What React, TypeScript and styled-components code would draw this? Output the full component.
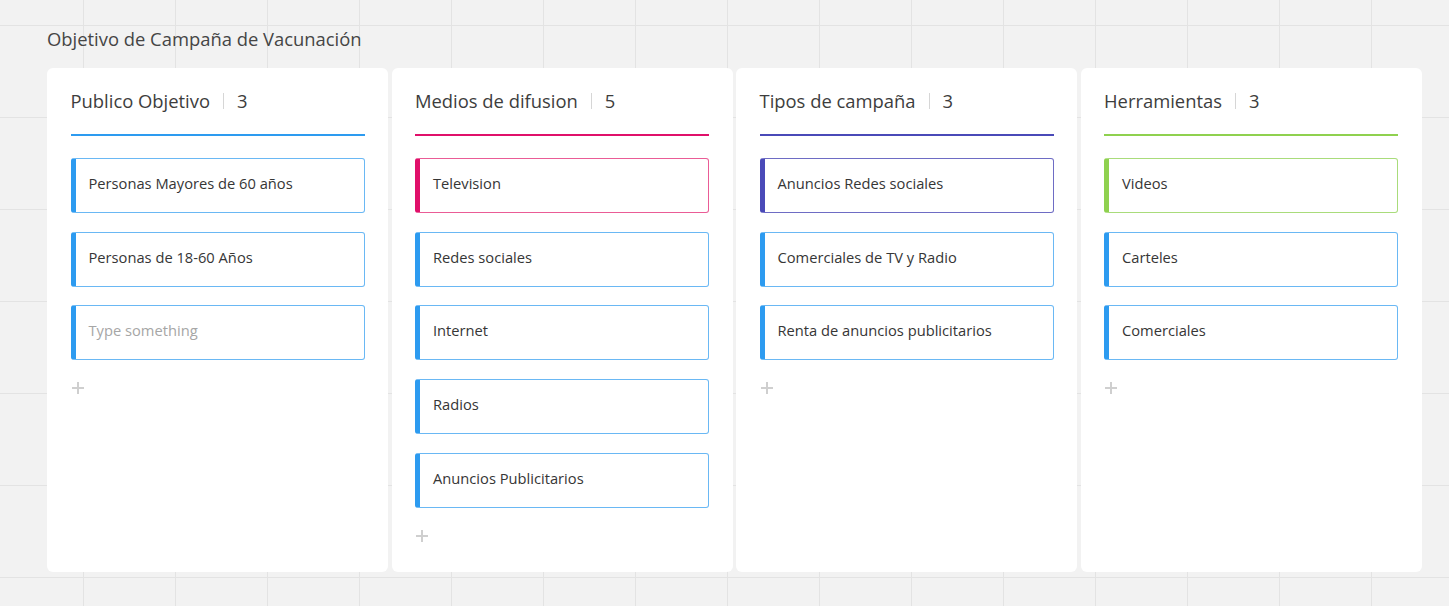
import React from "react";
import styled, { createGlobalStyle } from "styled-components";

const Global = createGlobalStyle`
  html, body { margin: 0; padding: 0; }
  body {
    font-family: "Open Sans", "Noto Sans", sans-serif;
    background-color: #f2f2f2;
    background-image:
      linear-gradient(to right, #e3e3e3 1px, transparent 1px),
      linear-gradient(to bottom, #e3e3e3 1px, transparent 1px);
    background-size: 92px 92px;
    background-position: 83px 25px;
    min-height: 606px;
    overflow: hidden;
  }
`;

const Page = styled.div`
  padding: 27px 28px 0 47px;
`;

const Title = styled.h1`
  margin: 0 0 17px;
  font-size: 18.4px;
  line-height: 24px;
  font-weight: 400;
  color: #454545;
`;

const Board = styled.div`
  display: grid;
  grid-template-columns: repeat(4, 341px);
  column-gap: 3.5px;
`;

const Column = styled.section`
  background: #fff;
  border-radius: 6px;
  height: 504px;
  box-sizing: border-box;
  padding: 21px 23.5px 0 23.5px;
  display: flex;
  flex-direction: column;
`;

const Header = styled.div<{ $color: string }>`
  display: flex;
  align-items: center;
  height: 24px;
  padding-bottom: 21px;
  border-bottom: 2px solid ${(p) => p.$color};
  margin-bottom: 22px;
`;

const HeaderTitle = styled.span`
  font-size: 18.4px;
  line-height: 24px;
  color: #3d3d3d;
`;

const Divider = styled.span`
  width: 1px;
  height: 16px;
  background: #d6d6d6;
  margin: 0 13px 0 13px;
`;

const Count = styled.span`
  font-size: 18.4px;
  line-height: 24px;
  color: #3d3d3d;
`;

const Cards = styled.div`
  display: flex;
  flex-direction: column;
  gap: 18.7px;
`;

const Card = styled.div<{ $color: string; $border: string }>`
  height: 55px;
  box-sizing: border-box;
  border: 1px solid ${(p) => p.$border};
  border-left: 5px solid ${(p) => p.$color};
  border-radius: 3px;
  display: flex;
  align-items: center;
  padding: 0 0 5px 13px;
  font-size: 14.7px;
  color: #363636;
  background: #fff;
`;

const Placeholder = styled.span`
  color: #a6a6a6;
`;

const AddButton = styled.button`
  margin-top: 22px;
  width: 12px;
  height: 12px;
  padding: 0;
  border: 0;
  background: transparent;
  position: relative;
  margin-left: 1px;
  cursor: pointer;
  &::before,
  &::after {
    content: "";
    position: absolute;
    background: #cfcfcf;
  }
  &::before {
    left: 0;
    right: 0;
    top: 5px;
    height: 2px;
  }
  &::after {
    top: 0;
    bottom: 0;
    left: 5px;
    width: 2px;
  }
`;

type Tone = { main: string; light: string };
const blue: Tone = { main: "#2d9bf0", light: "#6ab8f4" };
const pink: Tone = { main: "#e0106a", light: "#ea5c96" };
const purple: Tone = { main: "#4a4ab8", light: "#6e6cc4" };
const green: Tone = { main: "#8fd14f", light: "#a9dc7b" };

type Item = { text: string; tone: Tone; placeholder?: boolean };
type Col = { title: string; tone: Tone; items: Item[] };

const columns: Col[] = [
  {
    title: "Publico Objetivo",
    tone: blue,
    items: [
      { text: "Personas Mayores de 60 años", tone: blue },
      { text: "Personas de 18-60 Años", tone: blue },
      { text: "Type something", tone: blue, placeholder: true },
    ],
  },
  {
    title: "Medios de difusion",
    tone: pink,
    items: [
      { text: "Television", tone: pink },
      { text: "Redes sociales", tone: blue },
      { text: "Internet", tone: blue },
      { text: "Radios", tone: blue },
      { text: "Anuncios Publicitarios", tone: blue },
    ],
  },
  {
    title: "Tipos de campaña",
    tone: purple,
    items: [
      { text: "Anuncios Redes sociales", tone: purple },
      { text: "Comerciales de TV y Radio", tone: blue },
      { text: "Renta de anuncios publicitarios", tone: blue },
    ],
  },
  {
    title: "Herramientas",
    tone: green,
    items: [
      { text: "Videos", tone: green },
      { text: "Carteles", tone: blue },
      { text: "Comerciales", tone: blue },
    ],
  },
];

export default function App() {
  return (
    <>
      <Global />
      <Page>
        <Title>Objetivo de Campaña de Vacunación</Title>
        <Board>
          {columns.map((c) => (
            <Column key={c.title}>
              <Header $color={c.tone.main}>
                <HeaderTitle>{c.title}</HeaderTitle>
                <Divider />
                <Count>{c.items.length}</Count>
              </Header>
              <Cards>
                {c.items.map((it) => (
                  <Card key={it.text} $color={it.tone.main} $border={it.tone.light}>
                    {it.placeholder ? <Placeholder>{it.text}</Placeholder> : it.text}
                  </Card>
                ))}
              </Cards>
              <AddButton aria-label="Add card" />
            </Column>
          ))}
        </Board>
      </Page>
    </>
  );
}
